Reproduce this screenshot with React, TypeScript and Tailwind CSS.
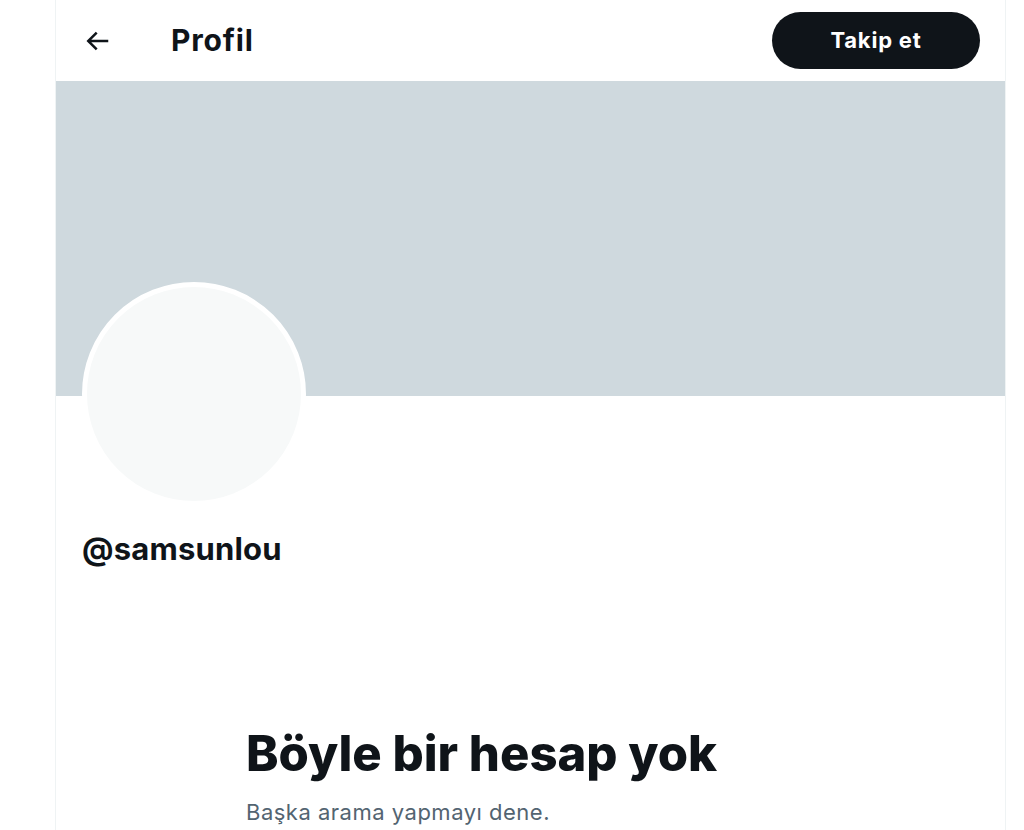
export default function App() {
  return (
    <div className="w-[1024px] h-[830px] bg-white overflow-hidden" style={{ fontFamily: "Inter, 'Liberation Sans', sans-serif" }}>
      <div className="ml-[55px] w-[951px] h-[830px] border-l border-r border-[#eff3f4] flex flex-col">
        <div className="h-[81px] flex items-center pl-[26px] pr-[25px]">
          <svg width="30" height="30" viewBox="0 0 24 24" className="text-[#0f1419]">
            <path fill="currentColor" d="M7.414 13l5.043 5.04-1.414 1.42L3.586 12l7.457-7.46 1.414 1.42L7.414 11H21v2H7.414z" />
          </svg>
          <div className="ml-[59px] text-[30px] font-bold text-[#0f1419] tracking-[0.8px]">Profil</div>
          <div className="flex-1" />
          <button className="w-[208px] h-[57px] rounded-full bg-[#0f1419] text-white text-[22px] font-bold tracking-[0.8px]">Takip et</button>
        </div>
        <div className="h-[315px] bg-[#cfd9de] shrink-0" />
        <div className="relative px-[26px]">
          <div className="absolute left-[26px] top-[-114px] w-[224px] h-[224px] rounded-full bg-[#f7f9f9] border-[5px] border-white" />
          <div className="h-[135px]" />
          <div className="text-[31px] font-bold text-[#0f1419] tracking-[0.2px] leading-[36px]">@samsunlou</div>
        </div>
        <div className="mt-[158px] pl-[190px]">
          <div className="text-[49px] font-extrabold text-[#0f1419] leading-[58px]">Böyle bir hesap yok</div>
          <div className="mt-[15px] text-[22px] text-[#536471] leading-[28px] tracking-[0.5px]">Başka arama yapmayı dene.</div>
        </div>
      </div>
    </div>
  );
}
